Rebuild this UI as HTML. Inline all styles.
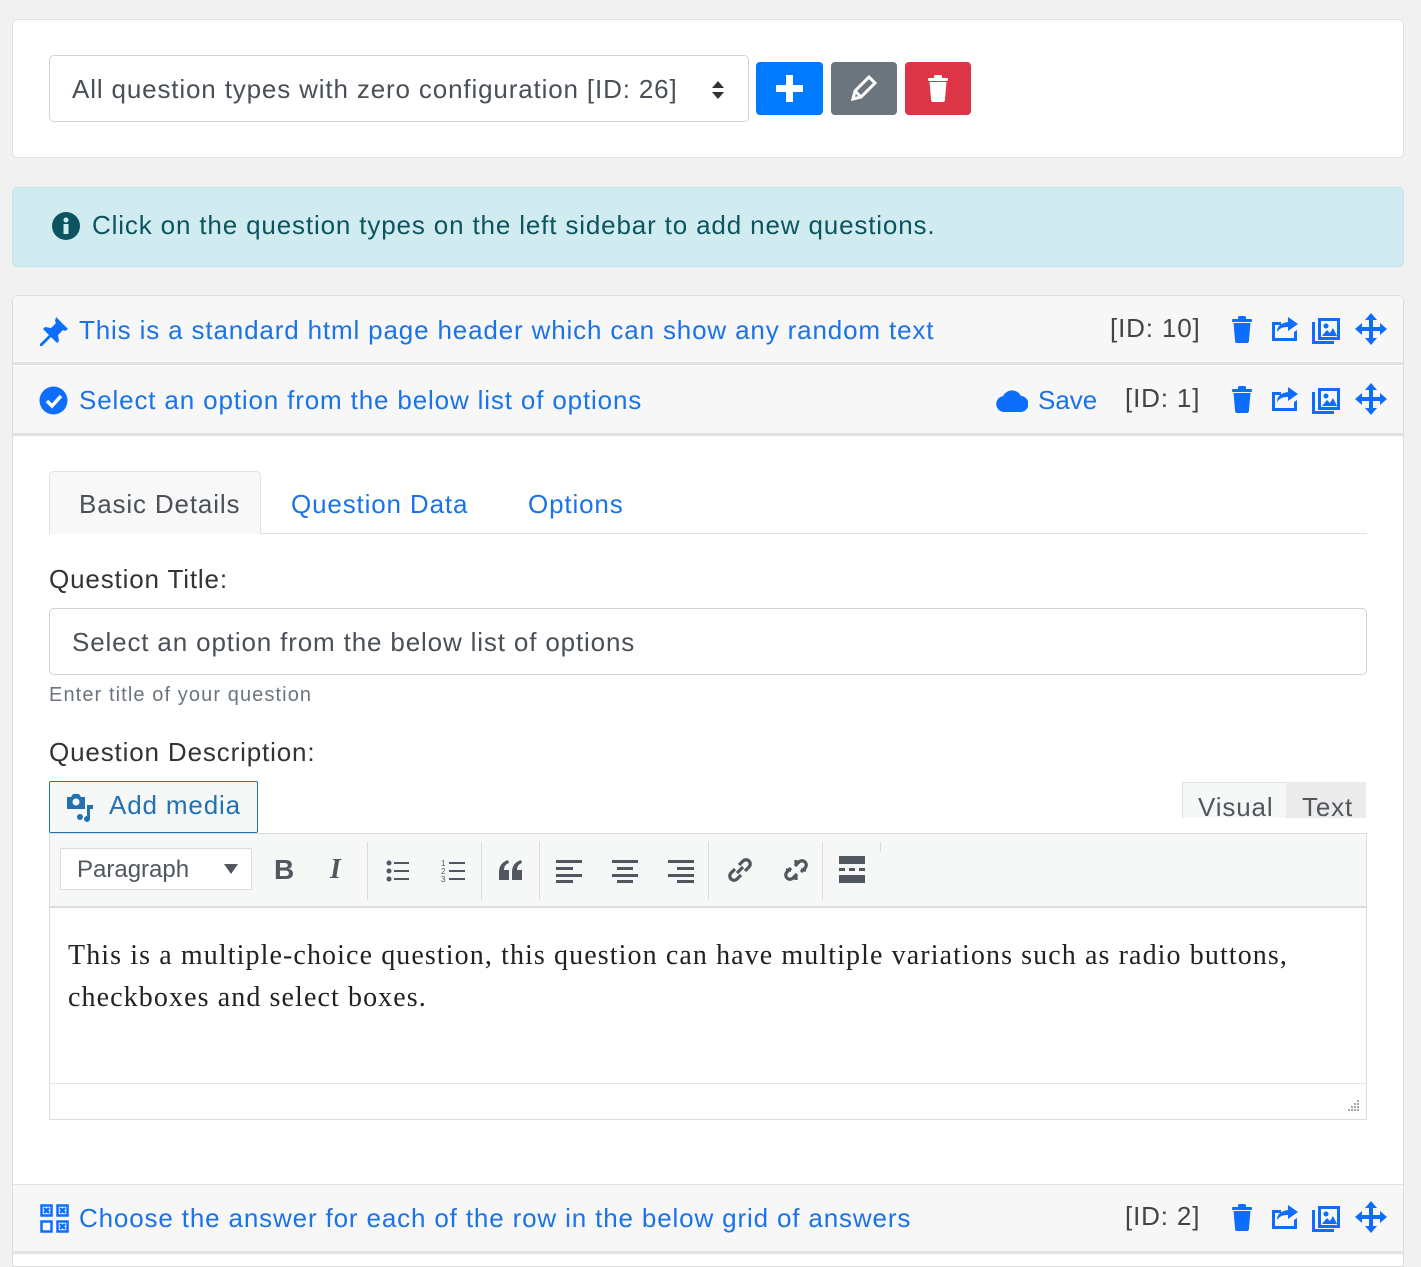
<!DOCTYPE html>
<html><head><meta charset="utf-8"><style>
*{box-sizing:border-box;margin:0;padding:0}
body{width:1421px;height:1267px;background:#f1f1f1;font-family:"Liberation Sans",sans-serif;position:relative;overflow:hidden;color:#333}
.a{position:absolute}
.blue{color:#1a73e8}
.ic{position:absolute;fill:#0d6efd}
.hdr{position:absolute;left:13px;width:1390px;background:#f7f7f7;border-bottom:3px solid #e2e2e2}
.t{position:absolute;font-size:26px;white-space:nowrap;letter-spacing:0.85px}
.tb{position:absolute;top:20px;height:34px;fill:#50575e}
.sep{position:absolute;top:8px;width:1px;height:58px;background:#dcdcde}
</style></head><body>
<svg width="0" height="0" style="position:absolute">
<symbol id="trash" viewBox="0 0 24 28"><rect x="2" y="4" width="20" height="3" rx="1"/><rect x="8" y="1" width="8" height="4" rx="1.5"/><path d="M3.5 8h17l-1.6 18a2 2 0 0 1-2 2H7.1a2 2 0 0 1-2-2z"/></symbol>
<symbol id="share" viewBox="0 0 30 26"><path d="M2 7h9v3H5v13h19v-6l3-2v11H2z"/><path d="M18 2l10 7-10 7v-4c-5 0-8 1-11 5 0-6 4-9 11-10z"/></symbol>
<symbol id="imgs" viewBox="0 0 32 32"><path d="M6 6h22v22H6z M9 9v16h16V9z"/><path d="M0 10h3v19h19v3H0z" /><circle cx="14" cy="14" r="2.5"/><path d="M10 24l5-6 3 3 3-5 4 8z"/></symbol>
<symbol id="move" viewBox="0 0 32 32"><path d="M16 0l6 7h-4v7h7v-4l7 6-7 6v-4h-7v7h4l-6 7-6-7h4v-7H7v4l-7-6 7-6v4h7V7h-4z"/></symbol>
</svg>

<div class="a" style="left:12px;top:19px;width:1392px;height:139px;background:#fff;border:1px solid #e0e0e0;border-radius:5px"></div>
<div class="a" style="left:49px;top:55px;width:700px;height:67px;border:1px solid #ced4da;border-radius:5px;background:#fff"></div>
<div class="t" style="left:72px;top:74px;color:#495057">All question types with zero configuration [ID: 26]</div>
<svg class="a" style="left:711px;top:80px" width="14" height="20"><path d="M7 1l6 7H1z M7 19l6-7H1z" fill="#333"/></svg>
<div class="a" style="left:756px;top:62px;width:67px;height:53px;background:#007bff;border-radius:4px"></div>
<svg class="a" style="left:776px;top:75px" width="27" height="27"><path d="M10 0h7v10h10v7H17v10h-7V17H0v-7h10z" fill="#fff"/></svg>
<div class="a" style="left:831px;top:62px;width:66px;height:53px;background:#6c757d;border-radius:4px"></div>
<svg class="a" style="left:851px;top:75px" width="26" height="26"><path d="M18 2l6 6-14 14-8 2 2-8z M5 17l4 4" fill="none" stroke="#fff" stroke-width="3"/></svg>
<div class="a" style="left:905px;top:62px;width:66px;height:53px;background:#dc3545;border-radius:4px"></div>
<svg class="a" style="left:926px;top:74px;fill:#fff" width="24" height="28"><use href="#trash"/></svg>

<div class="a" style="left:12px;top:187px;width:1392px;height:80px;background:#d1ecf1;border:1px solid #bee5eb;border-radius:5px"></div>
<svg class="a" style="left:52px;top:212px" width="28" height="28"><circle cx="14" cy="14" r="14" fill="#0c5460"/><circle cx="14" cy="8" r="2.5" fill="#d1ecf1"/><rect x="11.5" y="12" width="5" height="10" fill="#d1ecf1"/></svg>
<div class="t" style="left:92px;top:210px;color:#0c5460">Click on the question types on the left sidebar to add new questions.</div>

<div class="a" style="left:12px;top:295px;width:1392px;height:972px;background:#fff;border:1px solid #dedede;border-radius:5px 5px 0 0"></div>
<div class="hdr" style="top:296px;height:69px;border-radius:5px 5px 0 0"></div>
<svg class="ic" style="left:39px;top:316px" width="30" height="30"><path d="M17 1l12 12-3 2-2-1-5 5 1 6-2 2-6-6-9 9-2 0 0-2 9-9-6-6 2-2 6 1 5-5-1-2z"/></svg>
<div class="t blue" style="left:79px;top:315px">This is a standard html page header which can show any random text</div>
<div class="t" style="left:1110px;top:313px;color:#444">[ID: 10]</div>

<div class="hdr" style="top:366px;height:70px"></div>
<svg class="a" style="left:39px;top:386px" width="29" height="29"><circle cx="14.5" cy="14.5" r="14" fill="#0d6efd"/><path d="M8 15l5 5 9-10" fill="none" stroke="#fff" stroke-width="3.5"/></svg>
<div class="t blue" style="left:79px;top:385px">Select an option from the below list of options</div>
<svg class="ic" style="left:996px;top:390px" width="32" height="22"><path d="M8 22a8 8 0 0 1-1-15.9A10 10 0 0 1 25 6a8 8 0 0 1-1 16z"/></svg>
<div class="t blue" style="left:1038px;top:385px;letter-spacing:0">Save</div>
<div class="t" style="left:1125px;top:383px;color:#444">[ID: 1]</div>

<svg class="ic" style="left:1230px;top:315px" width="24" height="28"><use href="#trash"/></svg>
<svg class="ic" style="left:1270px;top:315px" width="30" height="26"><use href="#share"/></svg>
<svg class="ic" style="left:1312px;top:312px" width="32" height="32"><use href="#imgs"/></svg>
<svg class="ic" style="left:1355px;top:313px" width="32" height="32"><use href="#move"/></svg>
<svg class="ic" style="left:1230px;top:385px" width="24" height="28"><use href="#trash"/></svg>
<svg class="ic" style="left:1270px;top:385px" width="30" height="26"><use href="#share"/></svg>
<svg class="ic" style="left:1312px;top:382px" width="32" height="32"><use href="#imgs"/></svg>
<svg class="ic" style="left:1355px;top:383px" width="32" height="32"><use href="#move"/></svg>

<div class="a" style="left:49px;top:533px;width:1318px;height:1px;background:#dee2e6"></div>
<div class="a" style="left:49px;top:471px;width:212px;height:63px;background:#f8f8f8;border:1px solid #dee2e6;border-bottom:none;border-radius:5px 5px 0 0"></div>
<div class="t" style="left:79px;top:489px;color:#495057">Basic Details</div>
<div class="t blue" style="left:291px;top:489px">Question Data</div>
<div class="t blue" style="left:528px;top:489px">Options</div>

<div class="t" style="left:49px;top:564px">Question Title:</div>
<div class="a" style="left:49px;top:608px;width:1318px;height:67px;border:1px solid #ced4da;border-radius:5px"></div>
<div class="t" style="left:72px;top:627px;color:#495057">Select an option from the below list of options</div>
<div class="t" style="left:49px;top:684px;font-size:20px;color:#6c757d;letter-spacing:1.1px">Enter title of your question</div>
<div class="t" style="left:49px;top:737px">Question Description:</div>

<div class="a" style="left:49px;top:781px;width:209px;height:52px;border:1px solid #2271b1;background:#f6f7f7;border-radius:2px"></div>
<svg class="a" style="left:65px;top:791px" width="32" height="32" fill="#2271b1"><path d="M2 6h4l2-3h6l2 3h4v12H2z"/><circle cx="11" cy="11" r="3.5" fill="#f6f7f7"/><path d="M22 14h6v4h-3v10a3 3 0 1 1-3-3z"/><circle cx="15" cy="26" r="3"/></svg>
<div class="t" style="left:109px;top:790px;color:#2271b1">Add media</div>
<div class="a" style="left:1182px;top:782px;width:184px;height:36px;background:#f6f7f7;border:1px solid #e0e0e0;border-bottom:none"></div>
<div class="a" style="left:1286px;top:782px;width:80px;height:36px;background:#ebebeb"></div>
<div class="t" style="left:1198px;top:792px;color:#50575e">Visual</div>
<div class="t" style="left:1302px;top:792px;color:#50575e">Text</div>

<div class="a" style="left:49px;top:833px;width:1318px;height:287px;border:1px solid #dcdcde;background:#fff"></div>
<div class="a" style="left:50px;top:834px;width:1316px;height:74px;background:#f6f7f7;border-bottom:2px solid #dcdcde">
  <div class="a" style="left:10px;top:14px;width:192px;height:42px;background:#fff;border:1px solid #dcdcde"></div>
  <div class="t" style="left:27px;top:22px;font-size:24px;color:#50575e;letter-spacing:0">Paragraph</div>
  <svg class="a" style="left:174px;top:30px" width="14" height="10"><path d="M0 0h14L7 10z" fill="#50575e"/></svg>
  <div class="t" style="left:224px;top:20px;font-size:28px;font-weight:bold;color:#50575e">B</div>
  <div class="t" style="left:280px;top:20px;font-size:28px;font-style:italic;font-family:'Liberation Serif',serif;font-weight:bold;color:#50575e">I</div>
  <div class="sep" style="left:317px"></div>
  <svg class="a" style="left:336px;top:26px" width="24" height="22" fill="#50575e"><circle cx="3" cy="3" r="2.5"/><circle cx="3" cy="11" r="2.5"/><circle cx="3" cy="19" r="2.5"/><rect x="8" y="2" width="15" height="2"/><rect x="8" y="10" width="15" height="2"/><rect x="8" y="18" width="15" height="2"/></svg>
  <svg class="a" style="left:391px;top:24px" width="26" height="26" fill="#50575e"><text x="0" y="8" font-size="8" font-family="Liberation Sans">1</text><text x="0" y="16" font-size="8" font-family="Liberation Sans">2</text><text x="0" y="24" font-size="8" font-family="Liberation Sans">3</text><rect x="8" y="4" width="16" height="2"/><rect x="8" y="12" width="16" height="2"/><rect x="8" y="20" width="16" height="2"/></svg>
  <div class="sep" style="left:431px"></div>
  <svg class="a" style="left:448px;top:26px" width="26" height="20" fill="#50575e"><path d="M1 20V12c0-6 3-10 9-12l1 3c-3 1-5 3-5 7h5v10z M14 20V12c0-6 3-10 9-12l1 3c-3 1-5 3-5 7h5v10z"/></svg>
  <div class="sep" style="left:489px"></div>
  <svg class="a" style="left:506px;top:24px" width="26" height="26" fill="#50575e"><rect x="0" y="2" width="26" height="3"/><rect x="0" y="9" width="17" height="3"/><rect x="0" y="16" width="26" height="3"/><rect x="0" y="22" width="17" height="3"/></svg>
  <svg class="a" style="left:562px;top:24px" width="26" height="26" fill="#50575e"><rect x="0" y="2" width="26" height="3"/><rect x="5" y="9" width="16" height="3"/><rect x="0" y="16" width="26" height="3"/><rect x="5" y="22" width="16" height="3"/></svg>
  <svg class="a" style="left:618px;top:24px" width="26" height="26" fill="#50575e"><rect x="0" y="2" width="26" height="3"/><rect x="9" y="9" width="17" height="3"/><rect x="0" y="16" width="26" height="3"/><rect x="9" y="22" width="17" height="3"/></svg>
  <div class="sep" style="left:658px"></div>
  <svg class="a" style="left:674px;top:20px" width="32" height="32"><path d="M13 19l6-6 M11 15l-4 4a4 4 0 0 0 6 6l4-4 M21 17l4-4a4 4 0 0 0-6-6l-4 4" fill="none" stroke="#50575e" stroke-width="3.2"/></svg>
  <svg class="a" style="left:730px;top:20px" width="32" height="32"><path d="M11 14l-4 4a4 4 0 0 0 6 6l4-4 M21 18l4-4a4 4 0 0 0-6-6l-4 4 M16 6v5 M16 21v5 M6 16h5 M21 16h5" fill="none" stroke="#50575e" stroke-width="3.2"/></svg>
  <div class="sep" style="left:772px"></div>
  <svg class="a" style="left:789px;top:22px" width="26" height="28" fill="#50575e"><rect x="0" y="0" width="26" height="8"/><rect x="0" y="12" width="6" height="3"/><rect x="10" y="12" width="6" height="3"/><rect x="20" y="12" width="6" height="3"/><rect x="0" y="19" width="26" height="8"/></svg>
  <div class="sep" style="left:830px;height:10px"></div>
</div>
<div class="t" style="left:68px;top:935px;font-family:'Liberation Serif',serif;font-size:28px;letter-spacing:1.1px;line-height:42px;color:#222;white-space:normal;width:1290px">This is a multiple-choice question, this question can have multiple variations such as radio buttons, checkboxes and select boxes.</div>
<div class="a" style="left:50px;top:1083px;width:1316px;height:1px;background:#e5e5e5"></div>
<svg class="a" style="left:1346px;top:1099px" width="14" height="14" fill="#888"><circle cx="12" cy="2" r="1"/><circle cx="9" cy="5" r="1"/><circle cx="12" cy="5" r="1"/><circle cx="6" cy="8" r="1"/><circle cx="9" cy="8" r="1"/><circle cx="12" cy="8" r="1"/><circle cx="3" cy="11" r="1"/><circle cx="6" cy="11" r="1"/><circle cx="9" cy="11" r="1"/><circle cx="12" cy="11" r="1"/></svg>

<div class="hdr" style="top:1184px;height:70px;border-top:1px solid #e2e2e2"></div>
<svg class="a" style="left:40px;top:1204px" width="29" height="29" fill="none" stroke="#0d6efd" stroke-width="2.5"><rect x="1.5" y="1.5" width="10" height="10"/><rect x="17.5" y="1.5" width="10" height="10"/><rect x="1.5" y="17.5" width="10" height="10"/><rect x="17.5" y="17.5" width="10" height="10"/><path d="M4 4l5 5M9 4l-5 5M20 20l5 5M25 20l-5 5M20 4l5 5M25 4l-5 5"/></svg>
<div class="t blue" style="left:79px;top:1203px">Choose the answer for each of the row in the below grid of answers</div>
<div class="t" style="left:1125px;top:1201px;color:#444">[ID: 2]</div>
<svg class="ic" style="left:1230px;top:1203px" width="24" height="28"><use href="#trash"/></svg>
<svg class="ic" style="left:1270px;top:1203px" width="30" height="26"><use href="#share"/></svg>
<svg class="ic" style="left:1312px;top:1200px" width="32" height="32"><use href="#imgs"/></svg>
<svg class="ic" style="left:1355px;top:1201px" width="32" height="32"><use href="#move"/></svg>
</body></html>
